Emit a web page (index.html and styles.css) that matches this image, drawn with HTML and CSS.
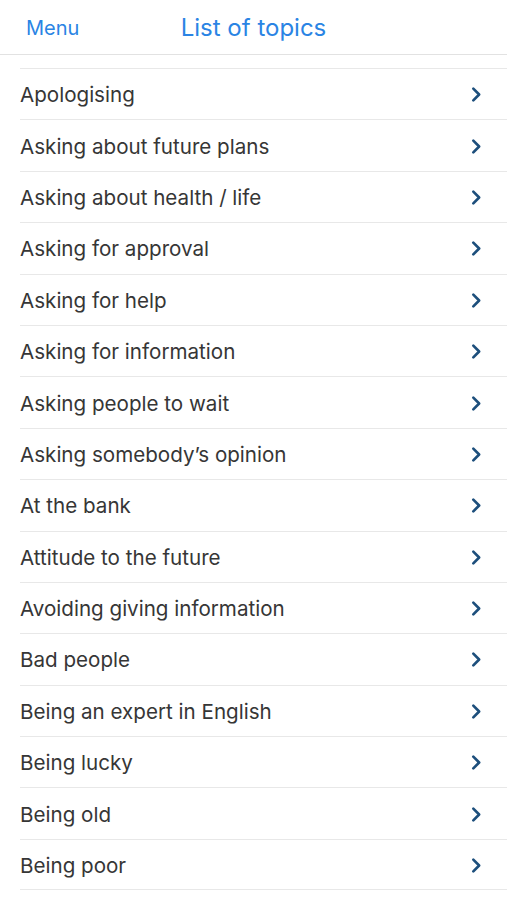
FILE: index.html
```html
<!DOCTYPE html>
<html lang="en">
<head>
<meta charset="utf-8">
<title>List of topics</title>
<link rel="stylesheet" href="styles.css">
</head>
<body>
<header class="navbar">
  <a class="nav-left">Menu</a>
  <h1 class="nav-title">List of topics</h1>
</header>
<div class="spacer"></div>
<ul class="topics">
  <li class="topic"><span>Apologising</span><svg class="chev" viewBox="0 0 10 16"><path d="M2 2.5 L7.5 8 L2 13.5"/></svg></li>
  <li class="topic"><span>Asking about future plans</span><svg class="chev" viewBox="0 0 10 16"><path d="M2 2.5 L7.5 8 L2 13.5"/></svg></li>
  <li class="topic"><span>Asking about health / life</span><svg class="chev" viewBox="0 0 10 16"><path d="M2 2.5 L7.5 8 L2 13.5"/></svg></li>
  <li class="topic"><span>Asking for approval</span><svg class="chev" viewBox="0 0 10 16"><path d="M2 2.5 L7.5 8 L2 13.5"/></svg></li>
  <li class="topic"><span>Asking for help</span><svg class="chev" viewBox="0 0 10 16"><path d="M2 2.5 L7.5 8 L2 13.5"/></svg></li>
  <li class="topic"><span>Asking for information</span><svg class="chev" viewBox="0 0 10 16"><path d="M2 2.5 L7.5 8 L2 13.5"/></svg></li>
  <li class="topic"><span>Asking people to wait</span><svg class="chev" viewBox="0 0 10 16"><path d="M2 2.5 L7.5 8 L2 13.5"/></svg></li>
  <li class="topic"><span>Asking somebody’s opinion</span><svg class="chev" viewBox="0 0 10 16"><path d="M2 2.5 L7.5 8 L2 13.5"/></svg></li>
  <li class="topic"><span>At the bank</span><svg class="chev" viewBox="0 0 10 16"><path d="M2 2.5 L7.5 8 L2 13.5"/></svg></li>
  <li class="topic"><span>Attitude to the future</span><svg class="chev" viewBox="0 0 10 16"><path d="M2 2.5 L7.5 8 L2 13.5"/></svg></li>
  <li class="topic"><span>Avoiding giving information</span><svg class="chev" viewBox="0 0 10 16"><path d="M2 2.5 L7.5 8 L2 13.5"/></svg></li>
  <li class="topic"><span>Bad people</span><svg class="chev" viewBox="0 0 10 16"><path d="M2 2.5 L7.5 8 L2 13.5"/></svg></li>
  <li class="topic"><span>Being an expert in English</span><svg class="chev" viewBox="0 0 10 16"><path d="M2 2.5 L7.5 8 L2 13.5"/></svg></li>
  <li class="topic"><span>Being lucky</span><svg class="chev" viewBox="0 0 10 16"><path d="M2 2.5 L7.5 8 L2 13.5"/></svg></li>
  <li class="topic"><span>Being old</span><svg class="chev" viewBox="0 0 10 16"><path d="M2 2.5 L7.5 8 L2 13.5"/></svg></li>
  <li class="topic"><span>Being poor</span><svg class="chev" viewBox="0 0 10 16"><path d="M2 2.5 L7.5 8 L2 13.5"/></svg></li>
</ul>
</body>
</html>
```
FILE: styles.css
```css
* { box-sizing: border-box; }
html, body {
  margin: 0;
  padding: 0;
  background: #ffffff;
  font-family: "Inter", "Noto Sans", sans-serif;
}
.navbar {
  height: 55px;
  display: flex;
  align-items: center;
  justify-content: center;
  position: relative;
  border-bottom: 1px solid #e2e2e2;
}
.nav-left {
  position: absolute;
  left: 26px;
  top: 16px;
  font-size: 20px;
  color: #2a84e4;
}
.nav-title {
  margin: 0;
  margin-top: 0;
  font-size: 24px;
  font-weight: 400;
  color: #2a84e4;
}
.spacer {
  height: 13px;
}
.topics {
  list-style: none;
  margin: 0;
  padding: 0 0 0 20px;
}
.topic {
  height: 51.4px;
  display: flex;
  align-items: center;
  justify-content: space-between;
  border-top: 1px solid #e8e8e8;
  padding-right: 25px;
  padding-top: 1px;
  font-size: 20.6px;
  color: #363636;
}
.topic:last-child {
  border-bottom: 1px solid #e8e8e8;
}
.chev {
  width: 11px;
  height: 17px;
  fill: none;
  stroke: #1d4f7c;
  stroke-width: 2.5;
  stroke-linecap: round;
  stroke-linejoin: round;
}
```
